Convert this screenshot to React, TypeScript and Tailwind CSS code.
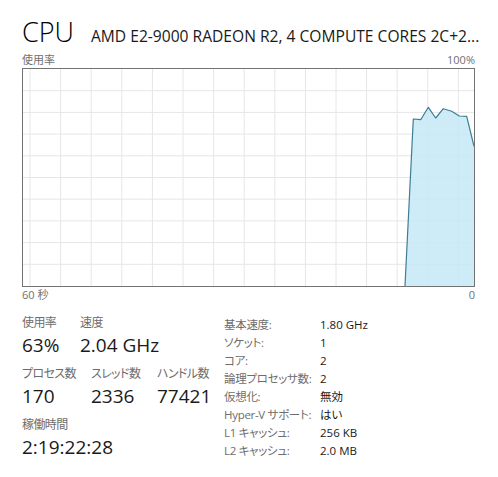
const FONT = "font-['Segoe_UI','Open_Sans','Noto_Sans_CJK_JP',sans-serif] [font-feature-settings:'palt']";

const points: [number, number][] = [
  [382, 217],
  [390.3, 50],
  [397.7, 50.7],
  [405.3, 38.3],
  [412.7, 49],
  [420.3, 39.7],
  [428.7, 42.3],
  [436.3, 47],
  [443.7, 47.3],
  [451, 77.3],
];

const specs: [string, string][] = [
  ["基本速度:", "1.80 GHz"],
  ["ソケット:", "1"],
  ["コア:", "2"],
  ["論理プロセッサ数:", "2"],
  ["仮想化:", "無効"],
  ["Hyper-V サポート:", "はい"],
  ["L1 キャッシュ:", "256 KB"],
  ["L2 キャッシュ:", "2.0 MB"],
];

function UsageGraph() {
  const w = 451;
  const h = 217;
  const vLines = Array.from({ length: 15 }, (_, i) => 7 + i * 30.6);
  const hLines = Array.from({ length: 9 }, (_, i) => (i + 1) * 21.7);
  const line = points.map(([x, y]) => `${x},${y}`).join(" ");
  const area = `${line} ${w},${h}`;
  return (
    <div className="h-[219px] w-[453px] border border-[#737373]">
      <svg width={w} height={h} viewBox={`0 0 ${w} ${h}`} className="block">
        {vLines.map((x) => (
          <line key={`v${x}`} x1={x} y1={0} x2={x} y2={h} stroke="#e6e6e6" strokeWidth={1} />
        ))}
        {hLines.map((y) => (
          <line key={`h${y}`} x1={0} y1={y} x2={w} y2={y} stroke="#e6e6e6" strokeWidth={1} />
        ))}
        <polygon points={area} fill="#c5e9f7" fillOpacity={0.85} />
        <polyline points={line} fill="none" stroke="#3f7d93" strokeWidth={1.2} strokeLinejoin="round" />
      </svg>
    </div>
  );
}

function Stat({ label, value, className }: { label: string; value: string; className?: string }) {
  return (
    <div className={`flex flex-col ${className ?? ""}`}>
      <span className="text-[12px] leading-[16px] tracking-[-0.6px] text-[#6d6d6d]">{label}</span>
      <span className="mt-[2px] text-[19px] leading-[24px] text-[#1a1a1a]">{value}</span>
    </div>
  );
}

export default function App() {
  return (
    <div className={`h-[477px] w-[498px] overflow-hidden bg-white ${FONT}`}>
      <div className="pl-[22px] pt-[14px]">
        <div className="flex w-[452px] items-baseline">
          <h1 className="shrink-0 text-[27px] font-light leading-[36px] text-black">CPU</h1>
          <span className="ml-[17px] whitespace-nowrap text-[15.6px] leading-[22px] text-[#1a1a1a]">
            AMD E2-9000 RADEON R2, 4 COMPUTE CORES 2C+2...
          </span>
        </div>

        <div className="mt-[2px] flex w-[453px] justify-between text-[11px] leading-[16px] text-[#707070]">
          <span>使用率</span>
          <span>100%</span>
        </div>
        <UsageGraph />
        <div className="flex w-[453px] justify-between text-[11px] leading-[16px] text-[#707070]">
          <span>60 秒</span>
          <span>0</span>
        </div>

        <div className="mt-[12px] flex">
          <div className="w-[202px]">
            <div className="flex">
              <Stat label="使用率" value="63%" className="w-[58px]" />
              <Stat label="速度" value="2.04 GHz" />
            </div>
            <div className="mt-[9px] flex">
              <Stat label="プロセス数" value="170" className="w-[69px]" />
              <Stat label="スレッド数" value="2336" className="w-[66px]" />
              <Stat label="ハンドル数" value="77421" />
            </div>
            <Stat label="稼働時間" value="2:19:22:28" className="mt-[9px]" />
          </div>

          <div className="mt-[1px] grid grid-cols-[96px_auto] self-start text-[11.5px] leading-[18px]">
            {specs.map(([k, v]) => (
              <div key={k} className="contents">
                <span className="whitespace-nowrap tracking-[-0.3px] text-[#6d6d6d]">{k}</span>
                <span className="text-[#1a1a1a]">{v}</span>
              </div>
            ))}
          </div>
        </div>
      </div>
    </div>
  );
}
